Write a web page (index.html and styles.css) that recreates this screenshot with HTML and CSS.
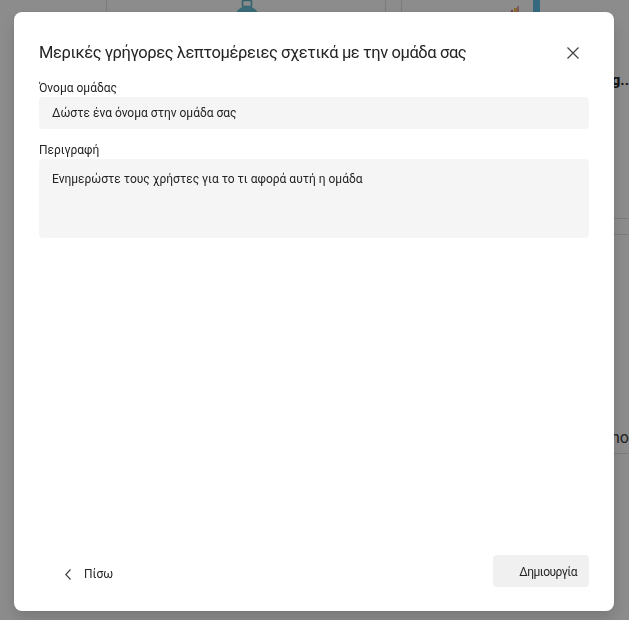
FILE: index.html
```html
<!DOCTYPE html>
<html lang="el">
<head>
    <meta charset="UTF-8">
    <meta name="viewport" content="width=device-width, initial-scale=1.0">
    <title>Δημιουργία ομάδας</title>
    <link rel="stylesheet" href="styles.css">
</head>

<body>
    <!-- Page behind the dialog -->
    <div class="page">
        <div class="side"></div>
        <div class="cards">
            <div class="card">
                <svg class="bag" width="24" height="14" viewBox="0 0 24 14">
                    <rect x="7.5" y="0.5" width="9" height="6" rx="1" fill="none" stroke="#5ab3c9" stroke-width="1.6"/>
                    <circle cx="12" cy="18" r="12" fill="#6cc2d8"/>
                </svg>
            </div>
            <div class="card wide">
                <svg class="chart" width="32" height="14" viewBox="0 0 32 14">
                    <rect x="1" y="10" width="2" height="4" fill="#e06262"/>
                    <rect x="4" y="8" width="3" height="6" fill="#f2c14e"/>
                    <rect x="7" y="6" width="2" height="8" fill="#e8a0b8"/>
                    <rect x="23" y="0" width="7" height="14" rx="1" fill="#62c0e8"/>
                </svg>
                <div class="card-title">Ομάδες reporting..</div>
            </div>
            <div class="card short"></div>
            <div class="card short wide"><div class="card-text">Ρυθμίσεις echo</div></div>
        </div>
    </div>

    <!-- Dialog -->
    <div class="overlay">
        <div class="dialog">
            <div class="dialog-head">
                <h2>Μερικές γρήγορες λεπτομέρειες σχετικά με την ομάδα σας</h2>
                <button class="close" aria-label="Κλείσιμο">
                    <svg width="12" height="12" viewBox="0 0 12 12">
                        <path d="M0.5 0.5 L11.5 11.5 M11.5 0.5 L0.5 11.5" stroke="#424242" stroke-width="1.2" fill="none"/>
                    </svg>
                </button>
            </div>

            <div class="field">
                <label for="teamName">Όνομα ομάδας</label>
                <input type="text" id="teamName" placeholder="Δώστε ένα όνομα στην ομάδα σας">
            </div>

            <div class="field">
                <label for="teamDesc">Περιγραφή</label>
                <textarea id="teamDesc" placeholder="Ενημερώστε τους χρήστες για το τι αφορά αυτή η ομάδα"></textarea>
            </div>

            <div class="dialog-foot">
                <button class="back">
                    <svg width="6" height="11" viewBox="0 0 6 11">
                        <path d="M5.5 0.5 L0.8 5.5 L5.5 10.5" stroke="#424242" stroke-width="1.2" fill="none"/>
                    </svg>
                    <span>Πίσω</span>
                </button>
                <button class="create">Δημιουργία</button>
            </div>
        </div>
    </div>
</body>

</html>
```

FILE: styles.css
```css
/* Base */
body {
    margin: 0;
    font-family: Roboto, "Liberation Sans", Arial, sans-serif;
    color: #242424;
    background-color: #ffffff;
    overflow: hidden;
}

/* Page that sits behind the dialog */
.page {
    display: flex;
    height: 620px;
}

.side {
    width: 106px;
    flex-shrink: 0;
}

.cards {
    display: grid;
    grid-template-columns: 280px 228px;
    grid-template-rows: 219px 220px;
    column-gap: 15px;
    row-gap: 15px;
}

.card {
    border: 1px solid #e0e0e0;
    border-top: none;
    border-radius: 0 0 4px 4px;
    background-color: #ffffff;
    text-align: center;
}

.card.wide {
    border-right: none;
    border-radius: 0 0 0 4px;
}

.card.short {
    border-top: 1px solid #e0e0e0;
}

.bag {
    display: block;
    margin: 0 auto;
    padding-left: 1px;
}

.chart {
    display: block;
    margin-left: 108px;
}

.card-title {
    margin-top: 57px;
    white-space: nowrap;
    font-weight: bold;
    font-size: 15px;
    text-align: right;
    color: #242424;
}

.card-text {
    margin-top: 193px;
    white-space: nowrap;
    font-size: 16px;
    text-align: right;
    color: #424242;
}

/* Dimmed overlay */
.overlay {
    position: fixed;
    top: 0;
    left: 0;
    right: 0;
    bottom: 0;
    background-color: rgba(0, 0, 0, 0.45);
    display: flex;
    justify-content: center;
    align-items: flex-start;
}

.dialog {
    margin-top: 12px;
    margin-left: -1px;
    width: 600px;
    height: 599px;
    box-sizing: border-box;
    padding: 25px 25px 24px 25px;
    background-color: #ffffff;
    border-radius: 8px;
    box-shadow: 0 8px 16px rgba(0, 0, 0, 0.14), 0 0 2px rgba(0, 0, 0, 0.12);
    display: flex;
    flex-direction: column;
}

.dialog-head {
    display: flex;
    align-items: center;
    justify-content: space-between;
    margin-bottom: 10px;
}

h2 {
    margin: 0;
    font-size: 16.5px;
    letter-spacing: -0.4px;
    line-height: 28px;
    font-weight: normal;
    white-space: nowrap;
}

.close {
    flex-shrink: 0;
    width: 32px;
    height: 32px;
    border: none;
    background: none;
    padding: 0;
    display: flex;
    align-items: center;
    justify-content: center;
    cursor: pointer;
}

/* Form fields */
.field {
    display: flex;
    flex-direction: column;
    margin-bottom: 12px;
}

label {
    font-size: 12px;
    line-height: 18px;
}

input,
textarea {
    width: 550px;
    box-sizing: border-box;
    border: none;
    border-radius: 4px;
    background-color: #f5f5f5;
    font-family: inherit;
    font-size: 12px;
    color: #242424;
    padding: 0 13px;
}

input {
    height: 32px;
}

textarea {
    height: 79px;
    padding-top: 13px;
    resize: none;
}

input::placeholder,
textarea::placeholder {
    color: #242424;
    opacity: 1;
}

/* Footer */
.dialog-foot {
    margin-top: auto;
    display: flex;
    justify-content: space-between;
    align-items: center;
}

.back {
    display: flex;
    align-items: center;
    gap: 13px;
    border: none;
    background: none;
    padding: 6px 0 0 26px;
    font-family: inherit;
    font-size: 12px;
    color: #242424;
    cursor: pointer;
}

.create {
    height: 32px;
    width: 96px;
    border: none;
    border-radius: 4px;
    background-color: #f0f0f0;
    font-family: inherit;
    font-size: 12px;
    letter-spacing: -0.5px;
    color: #242424;
    padding: 2px 12px 0 0;
    display: flex;
    align-items: center;
    justify-content: flex-end;
    cursor: pointer;
}
```
